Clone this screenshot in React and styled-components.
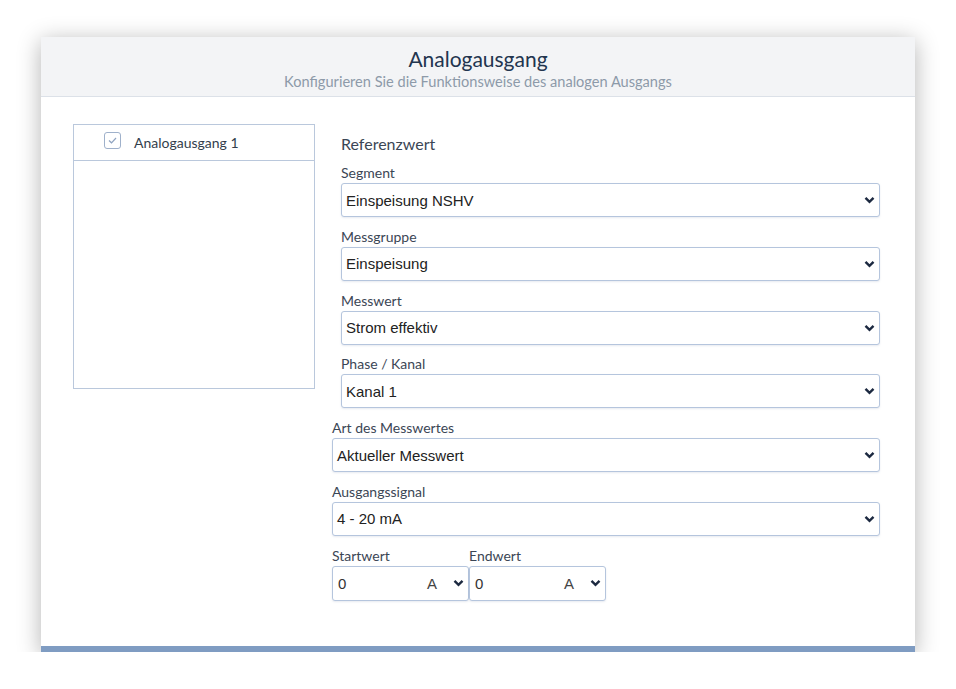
import React from 'react';
import styled, { createGlobalStyle } from 'styled-components';

const GlobalStyle = createGlobalStyle`
	html, body {
		margin: 0;
		padding: 0;
		background: #fff;
	}
	body {
		font-family: Lato, 'Open Sans', sans-serif;
	}
`;

const Page = styled.div`
	padding: 37px 41px 0 41px;
	width: 874px;
`;

const Panel = styled.div`
	background: #fff;
	height: 609px;
	border-bottom: 6px solid #7f9cc2;
	box-shadow: 0 4px 22px rgba(0, 0, 0, 0.3);
	display: flex;
	flex-direction: column;
`;

const Header = styled.div`
	height: 60px;
	box-sizing: border-box;
	background: #f3f4f6;
	border-bottom: 1px solid #dce1e8;
	display: flex;
	flex-direction: column;
	align-items: center;
	padding-top: 8px;
`;

const Title = styled.h1`
	margin: 0;
	font-size: 21px;
	line-height: 28px;
	font-weight: 400;
	color: #22354f;
`;

const Subtitle = styled.div`
	font-size: 14.6px;
	line-height: 18px;
	color: #8d9aa9;
`;

const Body = styled.div`
	display: flex;
	padding: 27px 35px 0 32px;
	gap: 17px;
`;

const ListBox = styled.div`
	width: 242px;
	height: 265px;
	box-sizing: border-box;
	border: 1px solid #bac8dc;
	flex-shrink: 0;
`;

const ListItem = styled.div`
	height: 36px;
	box-sizing: border-box;
	border-bottom: 1px solid #bac8dc;
	display: flex;
	align-items: center;
	padding-left: 30px;
	gap: 13px;
	font-size: 14px;
	color: #333e4c;
`;

const CheckBox = styled.span`
	width: 15px;
	height: 15px;
	border: 1px solid #9fb1cb;
	border-radius: 3px;
	display: flex;
	align-items: center;
	justify-content: center;
	margin-top: -4px;
`;

const Form = styled.div`
	flex: 1;
	display: flex;
	flex-direction: column;
`;

const Section = styled.div`
	padding-left: ${(p) => (p.$indent ? '9px' : '0')};
`;

const Heading = styled.div`
	font-size: 16px;
	line-height: 20px;
	color: #3b4655;
	margin: 10px 0 9px 0;
`;

const Group = styled.div`
	margin-bottom: 9.8px;
`;

const Label = styled.div`
	font-size: 14px;
	line-height: 20px;
	color: #3b4655;
`;

const SelectBox = styled.div`
	height: 34px;
	box-sizing: border-box;
	border: 1px solid #b5c5dd;
	border-radius: 3px;
	box-shadow: 0 1px 2px rgba(120, 140, 170, 0.18);
	display: flex;
	align-items: center;
	padding: 0 4px 0 4px;
	font-family: 'Liberation Sans', Arial, sans-serif;
	font-size: 15px;
	color: #222;
	background: #fff;
`;

const Value = styled.span`
	flex: 1;
`;

const Row = styled.div`
	display: flex;
`;

const SmallGroup = styled.div`
	width: 137px;
`;

const UnitBox = styled(SelectBox)`
	height: 35px;
	padding: 0 4px 0 5px;
	color: #333;
`;

const Unit = styled.span`
	margin-right: 16px;
	color: #444;
`;

const Chevron = () => (
	<svg width="11" height="8" viewBox="0 0 11 8">
		<path d="M1.5 1.8 L5.5 5.8 L9.5 1.8" fill="none" stroke="#1c2940" strokeWidth="2.4" />
	</svg>
);

const Select = ({ value }) => (
	<SelectBox>
		<Value>{value}</Value>
		<Chevron />
	</SelectBox>
);

const Field = ({ label, value }) => (
	<Group>
		<Label>{label}</Label>
		<Select value={value} />
	</Group>
);

const UnitField = ({ label, value, unit }) => (
	<SmallGroup>
		<Label>{label}</Label>
		<UnitBox>
			<Value>{value}</Value>
			<Unit>{unit}</Unit>
			<Chevron />
		</UnitBox>
	</SmallGroup>
);

export default function App() {
	return (
		<Page>
			<GlobalStyle />
			<Panel>
				<Header>
					<Title>Analogausgang</Title>
					<Subtitle>Konfigurieren Sie die Funktionsweise des analogen Ausgangs</Subtitle>
				</Header>
				<Body>
					<ListBox>
						<ListItem>
							<CheckBox>
								<svg width="9" height="7" viewBox="0 0 9 7">
									<path d="M1 3.5 L3.5 5.8 L8 1" fill="none" stroke="#8fa3c0" strokeWidth="1.2" />
								</svg>
							</CheckBox>
							Analogausgang 1
						</ListItem>
					</ListBox>
					<Form>
						<Section $indent>
							<Heading>Referenzwert</Heading>
							<Field label="Segment" value="Einspeisung NSHV" />
							<Field label="Messgruppe" value="Einspeisung" />
							<Field label="Messwert" value="Strom effektiv" />
							<Field label="Phase / Kanal" value="Kanal 1" />
						</Section>
						<Section>
							<Field label="Art des Messwertes" value="Aktueller Messwert" />
							<Field label="Ausgangssignal" value="4 - 20 mA" />
							<Row>
								<UnitField label="Startwert" value="0" unit="A" />
								<UnitField label="Endwert" value="0" unit="A" />
							</Row>
						</Section>
					</Form>
				</Body>
			</Panel>
		</Page>
	);
}
